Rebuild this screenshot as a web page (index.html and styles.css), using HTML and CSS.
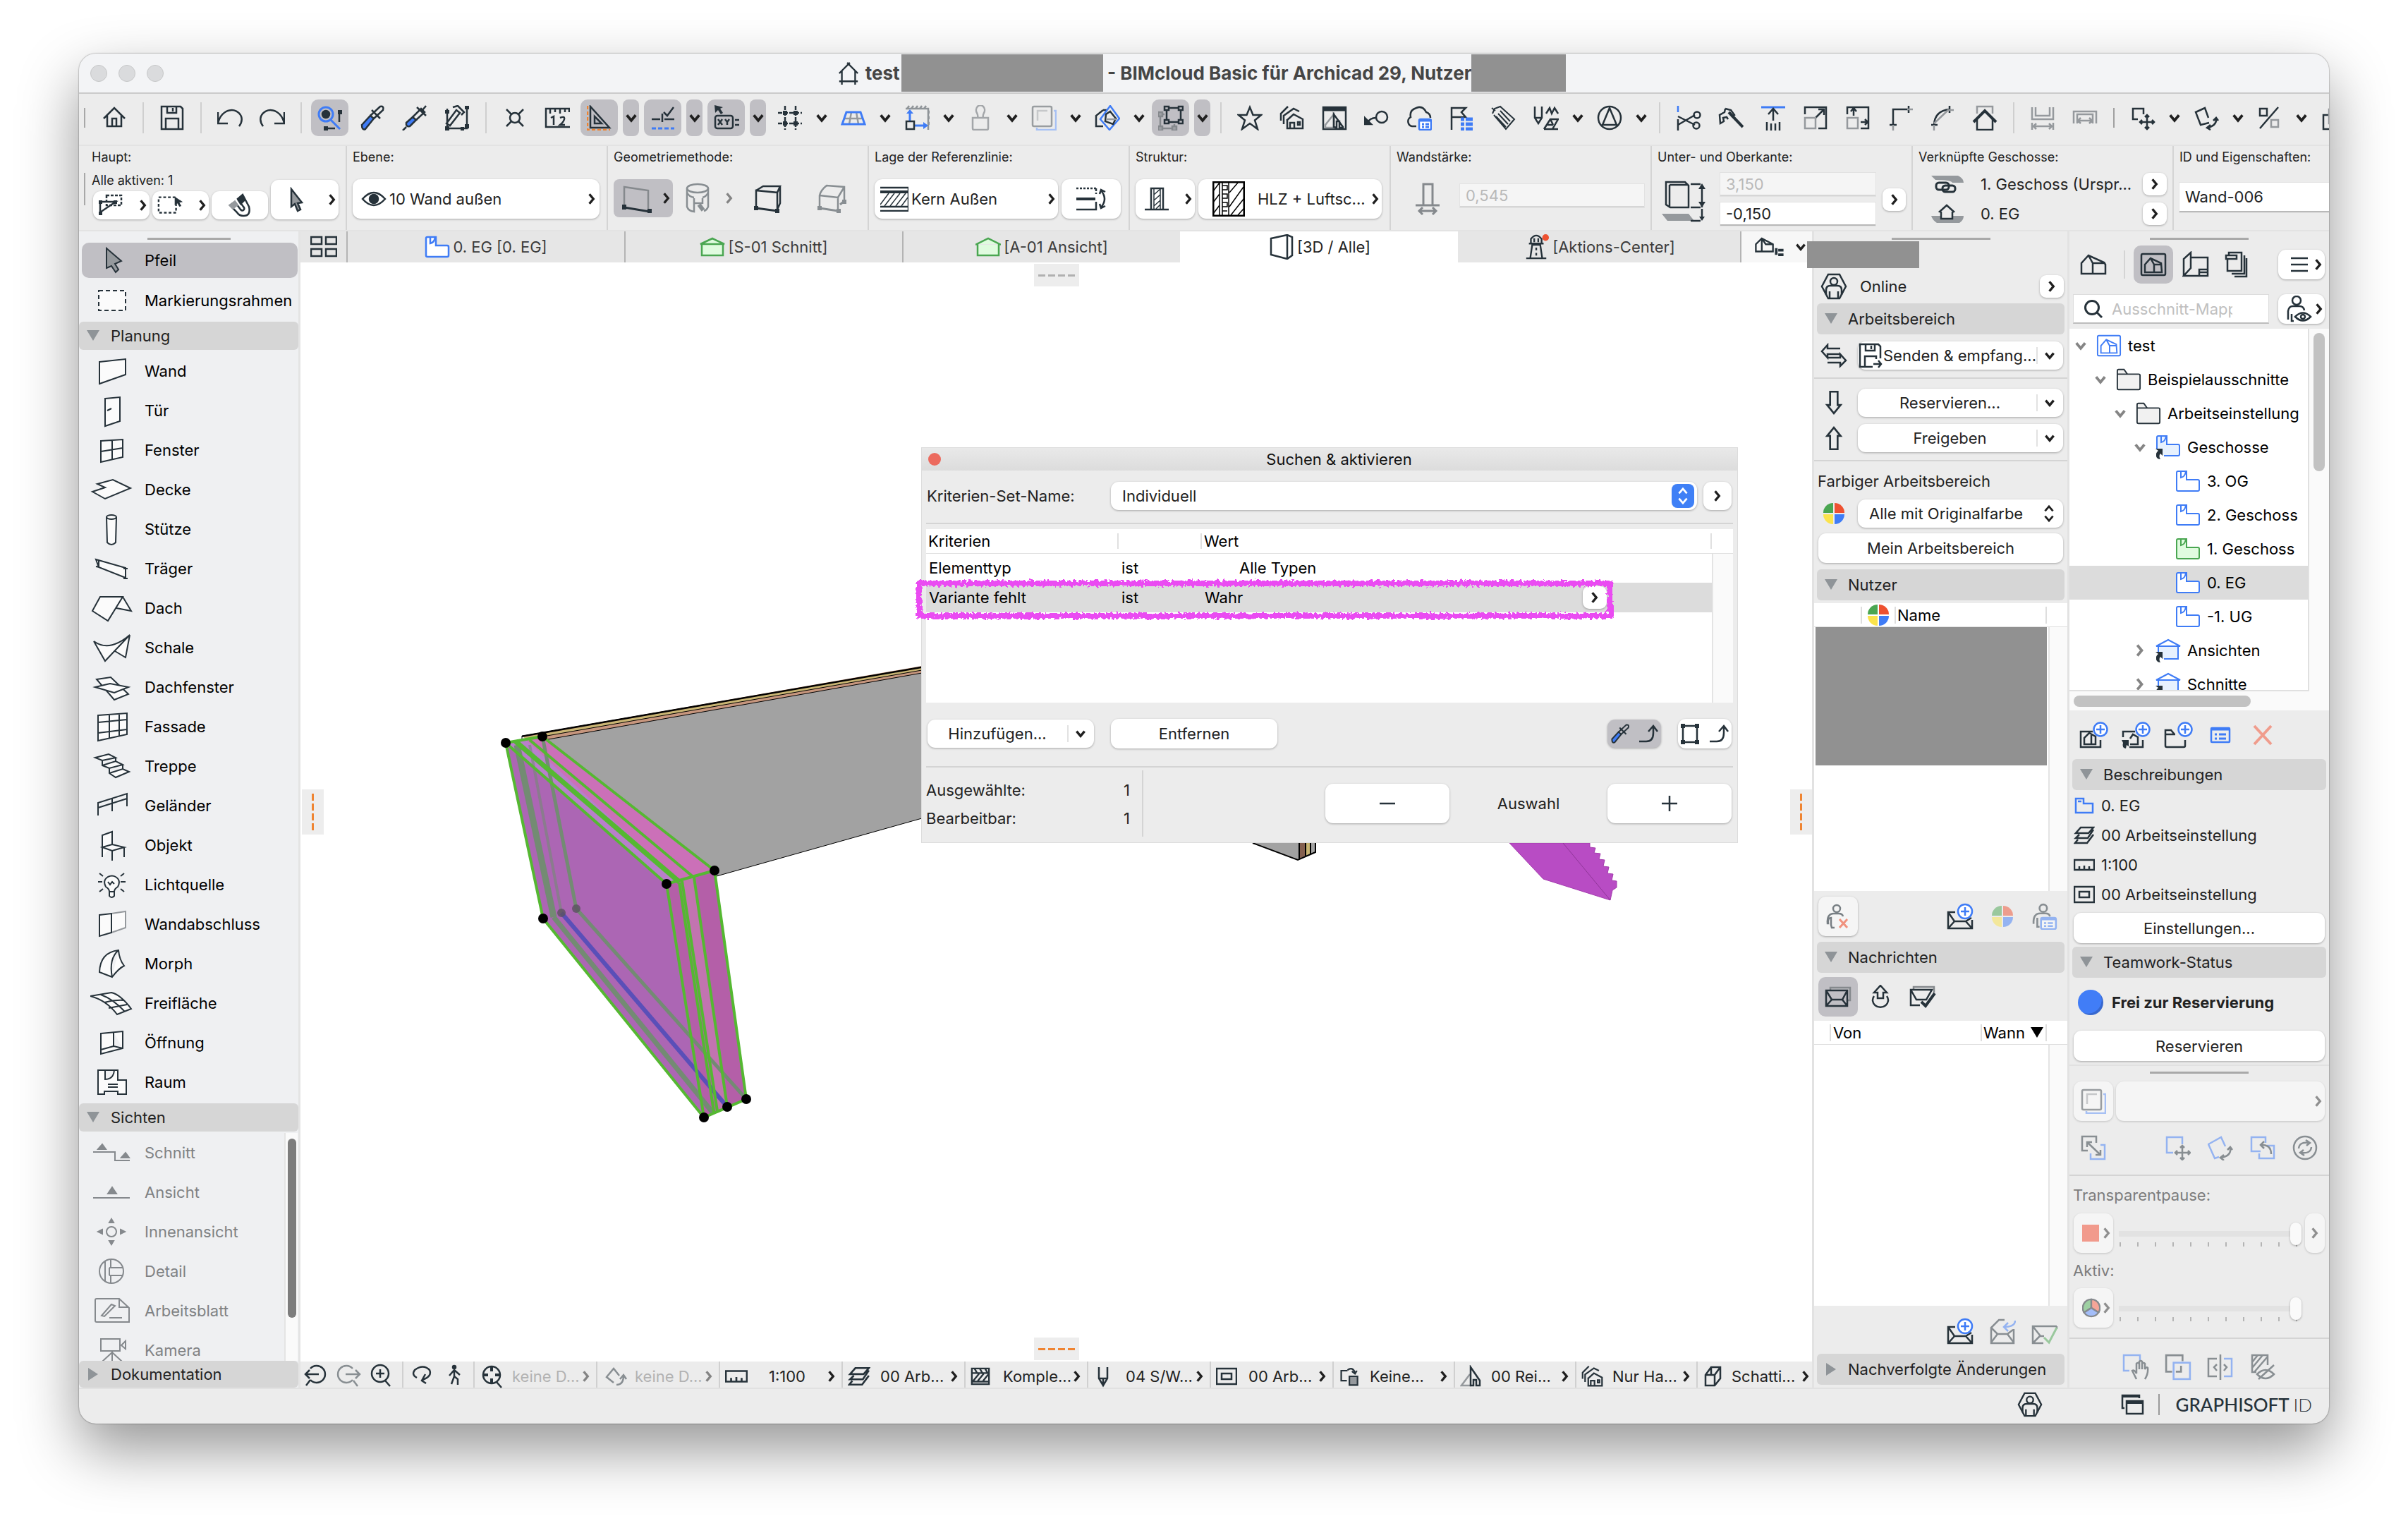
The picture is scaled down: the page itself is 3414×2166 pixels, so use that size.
FILE: index.html
```html
<!DOCTYPE html>
<html lang="de">
<head>
<meta charset="utf-8">
<title>test - BIMcloud Basic für Archicad 29</title>
<link rel="stylesheet" href="styles.css">
</head>
<body>
<svg class="sprite" aria-hidden="true">
  <!-- arrows -->
  <symbol id="cd" viewBox="0 0 16 16"><path d="M3 5l5 6 5-6" stroke-width="3"/></symbol>
  <symbol id="cr" viewBox="0 0 16 16"><path d="M5 2l5 6-5 6" stroke-width="3"/></symbol>
  <symbol id="ud" viewBox="0 0 20 28"><path d="M4 10l6-7 6 7M4 18l6 7 6-7" stroke-width="3"/></symbol>
  <symbol id="tri" viewBox="0 0 18 18"><path d="M0 1h18L9 16z" fill="#8f9498" stroke="none"/></symbol>
  <symbol id="trir" viewBox="0 0 18 18"><path d="M2 0v18L16 9z" fill="#8f9498" stroke="none"/></symbol>
  <!-- main toolbar -->
  <symbol id="logo" viewBox="0 0 30 34"><path d="M1 17L17 1M29 17L13 1M5 13v21M25 13v21M1 29h28"/></symbol>
  <symbol id="home" viewBox="0 0 36 36"><path d="M3 19L18 4l15 15M8 15v15h20V15M15 30V19h6v11"/></symbol>
  <symbol id="save" viewBox="0 0 36 36"><path d="M3 2h27l3 3v29H3zM11 2v9h13V2M19 4v5M9 34V19h18v15"/></symbol>
  <symbol id="undo" viewBox="0 0 36 36"><path d="M1 10v16h14M1 26C6 4 28 2 34 16c2 6 0 10-3 14"/></symbol>
  <symbol id="redo" viewBox="0 0 36 36"><path d="M35 10v16H21M35 26C30 4 8 2 2 16c-2 6 0 10 3 14"/></symbol>
  <symbol id="snapsel" viewBox="0 0 36 36"><circle cx="12" cy="13" r="10" stroke="#3f7cf6" stroke-width="3"/><path d="M19 21l13 13" stroke="#3f7cf6" stroke-width="3"/><circle cx="12" cy="13" r="5" fill="#26323a"/><path d="M31 24V10M12 33h13"/><path d="M29 7h6v6h-6zM9 30h6v6H9z" fill="#26323a" stroke="none"/></symbol>
  <symbol id="pip" viewBox="0 0 36 36"><path d="M3 28l12-13 5 4L8 34q-5 2-5-6z" fill="#3f7cf6"/><path d="M15 15L29 2q6-1 4 5L20 19M17 7l12 12"/></symbol>
  <symbol id="syr" viewBox="0 0 36 36"><path d="M6 25l9-8 5 4-9 9q-6 1-5-5z" fill="#3f7cf6"/><path d="M6 31l-5 5M15 17L27 5l5 5-12 11M21 3l13 12M29 7l5-6"/></symbol>
  <symbol id="trans" viewBox="0 0 36 36"><path d="M4 5v28h28V5M3 26L17 7l5 4L8 29zM12 3l7-2 9 9-4 4"/><path d="M1 7h6v5H1zM29 1h6v5h-6zM1 30h6v6H1zM29 27h6v6h-6zM23 31h5v5h-5z" fill="#26323a" stroke="none"/></symbol>
  <symbol id="xo" viewBox="0 0 36 36"><circle cx="18" cy="18" r="7"/><path d="M6 6l7 7M30 6l-7 7M6 30l7-7M30 30l-7-7"/></symbol>
  <symbol id="meas" viewBox="0 0 36 36"><path d="M36 5H2v26h34M8 5v7M15 5v5M22 5v7M29 5v5M35 5v5M9 18l4-2v12M22 18q7-3 6 2-1 4-6 8h7"/></symbol>
  <symbol id="setsq" viewBox="0 0 36 36"><path d="M5 2v30h27zM11 16v10h10z"/><path d="M1 1v34h32" stroke="#ef8432" stroke-dasharray="5 3"/></symbol>
  <symbol id="guide" viewBox="0 0 36 36"><path d="M2 20h12M20 20h14M17 12v12M19 10l5 5 9-12"/><path d="M2 33h32" stroke="#3f7cf6" stroke-width="3" stroke-dasharray="6 3"/></symbol>
  <symbol id="xy" viewBox="0 0 36 36"><path d="M1 0l12 3-4 2 4 6-3 2-4-6-4 4z" fill="#26323a" stroke="none"/><rect x="2" y="15" width="25" height="18" rx="3"/><path d="M6 20l6 8M12 20l-6 8M16 20l3 4 3-4M19 24v4M30 21h6M30 28h6"/></symbol>
  <symbol id="grid" viewBox="0 0 36 36"><path d="M1 11h34M1 26h34M11 1v34M26 1v34" stroke-dasharray="6 2"/><path d="M8 8h6v6H8zM23 8h6v6h-6zM8 23h6v6H8zM23 23h6v6h-6z" fill="#26323a" stroke="none"/></symbol>
  <symbol id="persp" viewBox="0 0 36 36"><path d="M15 10l-3 17M22 10l3 17M5 19h26" stroke="#95999d"/><path d="M8 10h20l6 17H2z" stroke="#3f7cf6" stroke-width="3"/></symbol>
  <symbol id="gridel" viewBox="0 0 36 36"><path d="M2 5h32v30M4 5l3-4M10 5l3-4M16 5l3-4M22 5l3-4M28 5l3-4M34 12l3-4M34 20l3-4M34 28l3-4" stroke="#8f9498"/><path d="M8 23V8M14 29h16" stroke="#3f7cf6" stroke-width="3"/><path d="M3 12l5-6 5 6zM27 24l7 5-7 5z" fill="#3f7cf6" stroke="none"/><rect x="3" y="23" width="11" height="11"/></symbol>
  <symbol id="stamp" viewBox="0 0 36 36"><path d="M7 18h22v15q0 2-2 2H9q-2 0-2-2zM14 18q1-3-1-7a6 7 0 1 1 10 0q-2 4-1 7" stroke="#a3a6a9"/></symbol>
  <symbol id="trace" viewBox="0 0 36 36"><path d="M32 8h3v27H8v-3" stroke="#a6c0f4"/><rect x="2" y="2" width="27" height="28" rx="2" stroke="#999da0"/><path d="M9 22V8h14" stroke="#c6c8ca"/></symbol>
  <symbol id="cutp" viewBox="0 0 36 36"><path d="M12 7L2 15v15h10M12 7h6"/><path d="M22 1l13 18-14 16L8 20z" stroke="#3f7cf6"/><path d="M22 9l8 10-4 8-11-4 1-10z"/><path d="M16 20h14" stroke="#95999d"/></symbol>
  <symbol id="group" viewBox="0 0 36 36"><path d="M12 4h20v20H12z"/><path d="M3 13v20h20V27M3 13h6" stroke="#85898d"/><path d="M0 10h6v6H0zM0 30h6v6H0zM20 30h6v6h-6z" fill="#9ea1a5" stroke="#85898d"/><path d="M9 2h6v5H9zM29 2h6v5h-6zM9 21h6v5H9zM29 21h6v5h-6z" fill="#bfbec3"/></symbol>
  <symbol id="star" viewBox="0 0 36 36"><path d="M18 3l4.500 11H34l-9 7.500L29 34l-11-8-11 8 4-12.500L2 14h11.500z"/></symbol>
  <symbol id="houses" viewBox="0 0 36 36"><path d="M10 22l10-9 13 7v13H11V20M15 33v-8h6v8M26 24h3v4h-3zM6 27V15l14-10 8 4M2 22V12L12 2"/></symbol>
  <symbol id="hwin" viewBox="0 0 36 36"><rect x="2" y="3" width="32" height="31"/><path d="M2 6h32" stroke-width="5"/><path d="M5 28l12-15v19H5z" stroke="#95999d"/><path d="M17 31V13l13 18v1h-5v-9h-4v9z"/></symbol>
  <symbol id="key" viewBox="0 0 36 36"><circle cx="25" cy="17" r="8"/><path d="M17 18q-9 0-12 7"/><path d="M1 18v9h9z" fill="#26323a"/></symbol>
  <symbol id="cloud" viewBox="0 0 36 36"><path d="M14 30H8a7 7 0 0 1-2-13q-2-10 8-13 9-4 14 6 6 2 6 8"/><rect x="18" y="20" width="17" height="15" rx="2" stroke="#3f7cf6" fill="#fff"/><path d="M18 22h17M22 27h3M27 27h5M22 31h3M27 31h5" stroke="#3f7cf6" stroke-width="3"/></symbol>
  <symbol id="flag" viewBox="0 0 36 36"><path d="M4 35V4h20l-6 6 6 7H4"/><path d="M17 20h5M24 20h10M17 27h5M24 27h10M17 34h5M24 34h10" stroke="#3f7cf6" stroke-width="5"/></symbol>
  <symbol id="tags" viewBox="0 0 36 36"><path d="M2 12L5 5l8-3 20 18-12 14L4 14M7 16l14 15M10 12l14 15M13 8l14 15M1 4l5 4" stroke-width="2"/></symbol>
  <symbol id="pens" viewBox="0 0 36 36"><path d="M2 2v16l5 8 5-8V2M2 18h10M18 12l5-8 3 8 4-8 5 8M15 34h20M15 34l9-14h11l-8 14M20 28h8M24 20l4 8"/></symbol>
  <symbol id="comp" viewBox="0 0 36 36"><circle cx="18" cy="18" r="16"/><path d="M18 4L8 28h20z"/></symbol>
  <symbol id="sciss" viewBox="0 0 36 36"><path d="M3 36V20"/><path d="M3 1v9" stroke="#3f7cf6"/><path d="M3 16l24 12M3 28L27 14"/><circle cx="30" cy="14" r="4.500"/><circle cx="29" cy="29" r="4.500"/></symbol>
  <symbol id="axe" viewBox="0 0 36 36"><path d="M10 5l8 2 5 7-4 3M10 5l-1 5-7 4 1 12 5-3-1-5 5-1 2 3"/><path d="M15 10l20 21" stroke-width="4"/></symbol>
  <symbol id="extrude" viewBox="0 0 36 36"><path d="M1 3h34" stroke="#3f7cf6" stroke-width="3"/><path d="M18 22V6M11 13l7-8 7 8M9 24v12M15 26v10M21 26v10M27 24v12"/></symbol>
  <symbol id="resize" viewBox="0 0 36 36"><path d="M3 13V3h30v30H22M18 18L30 6M22 6h8v8"/><path d="M3 18h15v15H3z" stroke="#95999d"/></symbol>
  <symbol id="stretch" viewBox="0 0 36 36"><path d="M3 13V3h30v30H22M12 15V5M8 9l4-5 4 5M22 24h10M28 20l4 4-4 4"/><path d="M3 18h15v15H3z" stroke="#95999d"/></symbol>
  <symbol id="corner" viewBox="0 0 36 36"><path d="M8 28V6h22M3 28h10M30 1v10"/><path d="M8 28v8M28 6h8" stroke="#95999d"/></symbol>
  <symbol id="fillet" viewBox="0 0 36 36"><path d="M6 28Q7 8 28 6M2 28h9M28 1v10"/><path d="M6 28v8M6 26L26 7h8" stroke="#95999d"/></symbol>
  <symbol id="roofh" viewBox="0 0 36 36"><path d="M7 12V2h22v10" stroke="#95999d"/><path d="M7 18v17h22V18"/><path d="M2 24L18 8l16 16" stroke-width="4"/></symbol>
  <symbol id="wx" viewBox="0 0 36 36"><path d="M3 3v17h30V3M8 3v12h20V3M3 25v10M33 25v10M5 30h26M9 26l-4 4 4 4M27 26l4 4-4 4" stroke="#95999d"/></symbol>
  <symbol id="wx2" viewBox="0 0 36 36"><path d="M2 26V9h32v17M7 26V13h22v13M9 22h18M12 18l-4 4 4 4M24 18l4 4-4 4" stroke="#95999d"/></symbol>
  <symbol id="mv" viewBox="0 0 36 36"><path d="M11 20H4V5h15v8"/><path d="M24 14v20M14 24h20M21 17l3-3 3 3M21 31l3 3 3-3M17 21l-3 3 3 3M31 21l3 3-3 3"/></symbol>
  <symbol id="rot" viewBox="0 0 36 36"><path d="M22 25L10 28 3 10 16 4l5 14M32 19q1 10-12 13M28 22l4-4 3 4M24 28l-5 4 5 3"/></symbol>
  <symbol id="mir" viewBox="0 0 36 36"><path d="M30 3L4 33M4 5h10v10H4z"/><path d="M20 21h10v10H20z" stroke="#95999d"/></symbol>
  <symbol id="mult" viewBox="0 0 36 36"><path d="M12 14H4v20h16"/><path d="M12 6h20v20H12z" stroke="#95999d"/></symbol>
  <!-- info box -->
  <symbol id="i1" viewBox="0 0 36 36"><path d="M12 4h21v14H12z" stroke-dasharray="4 2"/><path d="M3 28V13h22z"/><path d="M1 11h5v5H1zM1 27h5v5H1zM22 11h5v5h-5z" fill="#26323a" stroke="none"/></symbol>
  <symbol id="i2" viewBox="0 0 40 36"><path d="M2 6h26v23H2z" stroke-dasharray="4 3"/><path d="M26 5l12 8-5 1 3 5-3 1-3-5-4 3z" fill="#26323a" stroke="none"/></symbol>
  <symbol id="magnet" viewBox="0 0 36 36"><path d="M15 9l7-6 9 17q3 13-8 13-6 0-9-5L4 18l7-5 8 11q3 3 5 0 1-2-1-4z"/><path d="M14 10l8-8 4 9-7 7z" fill="#26323a" stroke="none"/><path d="M2 18l9-7 5 7-8 6z" fill="#95999d" stroke="none"/></symbol>
  <symbol id="arrow" viewBox="0 0 36 36"><path d="M11 3l15 19-6 1 4 9-4 2-4-10-5 4z" fill="#95999d"/></symbol>
  <symbol id="eye" viewBox="0 0 36 36"><path d="M2 18q16-18 32 0-16 18-32 0z"/><circle cx="18" cy="18" r="6" fill="#26323a"/></symbol>
  <symbol id="g1" viewBox="0 0 44 44"><path d="M4 33V6l34 5v27" stroke="#85898d"/><path d="M4 35l36 6" stroke-width="3"/><path d="M1 31h6v7H1zM37 37h6v6h-6z" fill="#26323a" stroke="none"/></symbol>
  <symbol id="g2" viewBox="0 0 44 44"><path d="M4 8v26q2 6 10 7V22M34 8v26q-2 5-6 6M26 22v8M14 29h12"/><ellipse cx="19" cy="8" rx="15" ry="6"/><path d="M4 14q3 6 10 7M34 14q-3 6-8 7"/><path d="M21 31l6 8" stroke-width="6"/></symbol>
  <symbol id="g3" viewBox="0 0 44 44"><path d="M4 35V11l30 3v24M4 11l10-6h24l-4 9M38 5v24l-4 9"/><path d="M4 36l30 4" stroke-width="3"/><path d="M1 33h6v6H1zM31 37h6v6h-6z" fill="#26323a" stroke="none"/></symbol>
  <symbol id="g4" viewBox="0 0 44 44"><path d="M5 35V18q2-8 10-14l25 2v20M5 18l26 3 9-15M31 21v17"/><path d="M5 36l26 4M40 26l-6 5" stroke-width="3"/><path d="M2 33h6v6H2zM29 37h6v6h-6zM37 24h6v6h-6z" fill="#26323a" stroke="none"/></symbol>
  <symbol id="ref" viewBox="0 0 40 36"><path d="M0 2h40M0 35h40M0 29h40M40 2v33"/><path d="M0 8h40" stroke-width="4"/><path d="M0 26l12-16M6 28l14-18M14 28l14-18M22 28l14-18M30 28l9-12" stroke-width="1.500"/></symbol>
  <symbol id="flip" viewBox="0 0 44 36"><path d="M1 3h28" stroke-dasharray="3 2"/><path d="M29 3v8" stroke-dasharray="4 2"/><path d="M1 18h27" stroke-width="4"/><path d="M1 33h28V22M36 6q10 12 0 24M34 11l2-6 6 3M34 25l2 6 6-3"/></symbol>
  <symbol id="col" viewBox="0 0 36 36"><path d="M10 3h17v30H10zM1 33h34"/><path d="M14 4v28M23 4v28M14 12l9-8M14 20l9-8M14 28l9-8M17 32l6-6" stroke-width="1.500"/></symbol>
  <symbol id="hlz" viewBox="0 0 46 50"><path d="M1 1h44v48H1z" stroke="#000" stroke-width="3"/><path d="M10 1v48M14 1v48M23 1v48M1 14l9-12M1 30l9-12M1 46l9-12M24 16L36 2M24 36L44 8M26 48L45 24M36 48l9-10M14 6h7v6h-7M14 18h7v6h-7M14 30h7v6h-7M14 42h7" stroke="#000" stroke-width="1.500"/></symbol>
  <symbol id="thick" viewBox="0 0 36 48"><path d="M12 2h13v30H12zM1 32h34M6 40h24M11 35l-5 5 5 5M25 35l5 5-5 5" stroke="#85898d" stroke-width="3"/></symbol>
  <symbol id="height" viewBox="0 0 64 60"><path d="M0 47h38l8 10H8z" fill="#95999d" stroke="none"/><path d="M6 2h27l5 5v31H12L6 34zM11 6h27M11 6v32M57 8v30M57 40v14M41 5h14M41 38h14M41 57h14"/><path d="M57 4l5 8H52zM57 38l5-8H52zM57 57l4-6h-8z" fill="#26323a" stroke="none"/></symbol>
  <symbol id="link" viewBox="0 0 46 24"><path d="M0 0h38q8 4 8 10H30q-2-4-24-4z" fill="#95999d" stroke="none"/><rect x="7" y="10" width="18" height="10" rx="4" stroke-width="3"/><rect x="16" y="14" width="18" height="9" rx="4" stroke-width="3"/></symbol>
  <symbol id="eg" viewBox="0 0 46 26"><path d="M0 16h46q0 6-6 10H8q-6-4-8-10z" fill="#95999d" stroke="none"/><path d="M14 20v-9l-2-1 10-9 10 9-2 1v9z" fill="#ececec"/></symbol>
  <!-- tabs -->
  <symbol id="four" viewBox="0 0 38 30"><path d="M1 1h15v10H1zM22 1h15v10H22zM1 18h15v10H1zM22 18h15v10H22z"/></symbol>
  <symbol id="plan" viewBox="0 0 36 32"><path d="M2 4q0-2 2-2h12v12h16q2 0 2 2v12q0 2-2 2H4q-2 0-2-2z" fill="#fff" stroke="#3f7cf6"/><path d="M8 2v9q6-1 7-9" stroke="#3f7cf6"/></symbol>
  <symbol id="plang" viewBox="0 0 36 32"><path d="M2 4q0-2 2-2h12v12h16q2 0 2 2v12q0 2-2 2H4q-2 0-2-2z" fill="#e0fbdf" stroke="#4aa651"/><path d="M8 2v9q6-1 7-9" stroke="#4aa651"/></symbol>
  <symbol id="planl" viewBox="0 0 36 36"><path d="M2 20V4q0-2 2-2h12v12h16q2 0 2 2v12q0 2-2 2H12" fill="#e7f1fe" stroke="#3f7cf6"/><path d="M8 2v9q6-1 7-9" stroke="#3f7cf6"/><path d="M0 20h10v10l-3-3q-3 3 0 8-7 0-6-8 1-3 3-4z" fill="#26323a" stroke="none"/></symbol>
  <symbol id="hl" viewBox="0 0 36 36"><path d="M4 12h28v18H10V20H4z" fill="#e7f1fe" stroke="none"/><path d="M4 20v-8M1 12L18 3l17 9zM32 12v18H12" stroke="#3f7cf6"/><path d="M0 20h10v10l-3-3q-3 3 0 8-7 0-6-8 1-3 3-4z" fill="#26323a" stroke="none"/></symbol>
  <symbol id="sec" viewBox="0 0 36 28"><path d="M3 10h30v16H3zM1 10L18 2l17 8z" fill="#e0fbdf" stroke="#4aa651"/></symbol>
  <symbol id="elev" viewBox="0 0 36 28"><path d="M3 10v16h30V10M0 11L18 2l18 9" fill="#e0fbdf" stroke="#4aa651"/></symbol>
  <symbol id="box3" viewBox="0 0 36 36"><path d="M3 6l23-5 7 3v26l-7 5-23-6zM26 1v34"/></symbol>
  <symbol id="light" viewBox="0 0 36 38"><path d="M2 36h30M8 36l3-20h12l3 20M6 14h22M9 14V7q8-10 16 0v7M17 20v4M17 28v4M14 6v6M20 6v6"/><circle cx="31" cy="5" r="5" fill="#ee5130" stroke="none"/></symbol>
  <symbol id="hlist" viewBox="0 0 46 30"><path d="M2 22V11L11 2l17 9v11zM11 2v20M11 2l6 9h11"/><path d="M33 17v10M36 20h8M36 27h8" stroke-width="4"/></symbol>
  <!-- teamwork -->
  <symbol id="hex" viewBox="0 0 38 36"><path d="M11 1h16l9 17-9 17H11L2 18z"/><circle cx="19" cy="11" r="5"/><path d="M8 30V23q0-6 6-6h10q6 0 6 6v7M13 34v-9M25 34v-9"/></symbol>
  <symbol id="sync" viewBox="0 0 38 32"><path d="M28 6H10V1L2 10l8 9v-5h18M10 19h18v-5l8 9-8 8v-5H10"/></symbol>
  <symbol id="send" viewBox="0 0 34 36"><path d="M20 34H2V2h26l3 3v17M10 2v9h13V2M18 4v5M12 34h-3V19h16v4M21 30h11M28 25l4 5-4 5"/></symbol>
  <symbol id="dn" viewBox="0 0 24 32"><path d="M7 1h10v18h4l-9 11-9-11h4z"/></symbol>
  <symbol id="up" viewBox="0 0 24 32"><path d="M7 31h10V13h4L12 2 3 13h4z"/></symbol>
  <symbol id="pie" viewBox="0 0 32 32"><path d="M15 15V1A14 14 0 0 0 1 15z" fill="#4aa651" stroke="none"/><path d="M17 15V1a14 14 0 0 1 14 14z" fill="#ee5130" stroke="none"/><path d="M15 17v14A14 14 0 0 1 1 17z" fill="#fbe34c" stroke="none"/><path d="M17 17v14a14 14 0 0 0 14-14z" fill="#3f7cf6" stroke="none"/></symbol>
  <symbol id="px" viewBox="0 0 36 36"><circle cx="16" cy="7" r="5"/><path d="M13 34H9l-1-4V20q-5 0-4 8H3q-1-14 9-14h7q5 0 6 4"/><path d="M20 22l11 12M31 22L20 34" stroke="#ee5130" stroke-width="3"/></symbol>
  <symbol id="pc" viewBox="0 0 36 36"><circle cx="16" cy="7" r="5"/><path d="M11 32H8V20M3 28q-1-14 9-14h7q5 0 6 4"/><rect x="13" y="20" width="20" height="15" rx="2" stroke="#3f7cf6" fill="#fff"/><path d="M13 22h20M17 27h3M22 27h7M17 31h3M22 31h7" stroke="#3f7cf6"/></symbol>
  <symbol id="mailp" viewBox="0 0 38 38"><path d="M12 13H2v23h34V24M2 13l9 13h16l8-5M11 26L3 35M27 26l8 9"/><circle cx="26" cy="12" r="10" fill="#fff" stroke="#3f7cf6"/><path d="M26 6v12M20 12h12" stroke="#3f7cf6"/></symbol>
  <symbol id="mailr" viewBox="0 0 38 38"><path d="M22 3h-8L3 14v22h32V16M3 14l9 9h14l8-6M12 23L3 35M26 23l9 12"/><path d="M37 4q0 9-16 9M27 7l-6 6 6 6" stroke="#3f7cf6"/></symbol>
  <symbol id="mailc" viewBox="0 0 38 38"><path d="M17 36H2V12h34M2 12l11 14h5M2 36l10-10M36 12v4"/><path d="M18 28l7 7L36 14" stroke="#4aa651" stroke-width="3"/></symbol>
  <symbol id="mail" viewBox="0 0 38 30"><path d="M8 5V2h28v18h-4" stroke="#85898d"/><path d="M2 6h30v22H2zM2 6l8 13h15l7-13M10 19l-8 9M25 19l7 9"/></symbol>
  <symbol id="outm" viewBox="0 0 30 34"><path d="M6 16a11 10 0 1 0 18 0M11 19v-8H6l9-10 9 10h-5v8z"/></symbol>
  <symbol id="mailk" viewBox="0 0 38 32"><path d="M6 5V2h29v8" stroke="#85898d"/><path d="M15 28H2V6h30L24 20H10L2 6"/><path d="M17 23l6 6L36 11" stroke-width="4"/></symbol>
  <!-- navigator -->
  <symbol id="hs" viewBox="0 0 38 30"><path d="M2 28V13L12 2l22 10 2 3v13zM12 2l6 11v15M18 13h18"/></symbol>
  <symbol id="hsbox" viewBox="0 0 38 34"><rect x="2" y="2" width="34" height="30" rx="2"/><path d="M7 28V17l8-9 15 7 1 13zM15 8l5 9v11M20 17h11"/></symbol>
  <symbol id="lay" viewBox="0 0 38 36"><path d="M2 34V10l10-9v22L2 34h34V8H12M24 34v-9h12M24 29h12"/></symbol>
  <symbol id="pub" viewBox="0 0 38 38"><path d="M4 11v17h20V2H6v4M2 6h15v5H2zM28 6v26H10M31 10v26H14"/></symbol>
  <symbol id="menu" viewBox="0 0 26 24"><path d="M1 3h24M1 12h24M1 21h24"/></symbol>
  <symbol id="peye" viewBox="0 0 36 38"><circle cx="14" cy="7" r="6"/><path d="M10 36H7V26M2 34V22q1-7 7-7h9q6 0 7 6"/><path d="M12 30q11-11 22 0-11 11-22 0z"/><circle cx="23" cy="30" r="3"/></symbol>
  <symbol id="mag" viewBox="0 0 28 28"><circle cx="12" cy="12" r="9.500" stroke-width="3"/><path d="M19 19l7 7" stroke-width="3"/></symbol>
  <symbol id="fold" viewBox="0 0 38 34"><path d="M2 9V4q0-2 2-2h8l5 7h17q2 0 2 2v19q0 2-2 2H4q-2 0-2-2zh15" fill="#f1f1f1"/></symbol>
  <symbol id="navp" viewBox="0 0 42 38"><path d="M20 14H3v22h28V26M8 32v-9l7-7 9 5v11zM18 19v12"/><circle cx="31" cy="11" r="9.500" fill="#fff" stroke="#3f7cf6"/><path d="M31 5v12M25 11h12" stroke="#3f7cf6"/></symbol>
  <symbol id="navl" viewBox="0 0 42 38"><path d="M20 14H3v8M12 36h19V26M13 24l4-6 7 4v10H13"/><path d="M1 26h10v9l-3-2-1 5q-6-1-4-8z" fill="#26323a" stroke="none"/><circle cx="31" cy="11" r="9.500" fill="#fff" stroke="#3f7cf6"/><path d="M31 5v12M25 11h12" stroke="#3f7cf6"/></symbol>
  <symbol id="navf" viewBox="0 0 42 38"><path d="M17 18H3v16q0 2 2 2h24q2 0 2-2V26M3 18v-6h8l5 6"/><circle cx="31" cy="11" r="9.500" fill="#fff" stroke="#3f7cf6"/><path d="M31 5v12M25 11h12" stroke="#3f7cf6"/></symbol>
  <symbol id="card" viewBox="0 0 30 24"><rect x="2" y="2" width="26" height="20" rx="1" stroke="#3f7cf6"/><path d="M2 4h26M7 11h3M13 11h10M7 17h3M13 17h10" stroke="#3f7cf6" stroke-width="3"/></symbol>
  <symbol id="del" viewBox="0 0 30 32"><path d="M3 3l24 26M27 3L3 29" stroke="#f09c8c" stroke-width="4"/></symbol>
  <symbol id="d1" viewBox="0 0 30 24"><path d="M3 2h11v7h13v13H3zM6 6h5" stroke="#3f7cf6"/></symbol>
  <symbol id="layers" viewBox="0 0 30 24"><path d="M10 1h18l-7 8H3zM8 11l-5 5h17l8-12M6 18l-4 5h17l9-12"/></symbol>
  <symbol id="ruler" viewBox="0 0 30 24"><path d="M1 5h28v14H1zM8 19v-5M15 19v-6M22 19v-5"/></symbol>
  <symbol id="frame" viewBox="0 0 30 24"><path d="M1 1h28v22H1zM8 8h14v8H8z" stroke-width="2.500"/></symbol>
  <symbol id="tr1" viewBox="0 0 36 36"><path d="M10 22H2V2h20v9"/><path d="M28 14h6v20H14v-8" stroke="#3f7cf6"/><path d="M9 10l19 18M9 17v-7h7M28 21v7h-7"/></symbol>
  <symbol id="trm" viewBox="0 0 36 36"><path d="M11 25H2V3h22v10" stroke="#3f7cf6"/><path d="M24 16v18M15 25h20M21 18l3-3 3 3M21 32l3 3 3-3M17 22l-3 3 3 3M32 22l3 3-3 3"/></symbol>
  <symbol id="trr" viewBox="0 0 36 36"><path d="M16 31l-6 2L1 13 19 3l6 13" stroke="#3f7cf6"/><path d="M32 18q2 12-14 14M28 21l4-4 3 4M23 28l-5 4 5 4"/></symbol>
  <symbol id="trb" viewBox="0 0 36 36"><path d="M15 23H2V3h20v8M24 15h10v18H13v-7" stroke="#3f7cf6"/><path d="M30 27q0-14-15-13M20 9l-5 5 5 5"/></symbol>
  <symbol id="trc" viewBox="0 0 36 36"><circle cx="18" cy="18" r="16"/><path d="M9 19q1-10 15-8M19 7l6 4-5 4M27 17q-1 10-15 8M17 29l-6-4 5-4"/></symbol>
  <symbol id="pie3" viewBox="0 0 28 28"><path d="M14 14V1A13 13 0 0 0 3 21z" fill="#9ed0a2"/><path d="M14 14V1a13 13 0 0 1 11 20z" fill="#f5a598"/><path d="M14 14L3 21a13 13 0 0 0 22 0z" fill="#a3bdf8"/></symbol>
  <symbol id="hand" viewBox="0 0 38 38"><path d="M10 24H2V2h23v7" stroke="#3f7cf6"/><path d="M20 36l-6-12q3-2 6 4V14q2-2 4 0v8V11q2-2 4 0v11-8q2-2 4 0v8q2-4 4-2 1 8-4 16"/></symbol>
  <symbol id="ovl" viewBox="0 0 36 36"><path d="M10 24H2V2h22v8M22 16v8h-7"/><rect x="12" y="12" width="22" height="22" stroke="#3f7cf6"/></symbol>
  <symbol id="spl" viewBox="0 0 38 38"><path d="M14 7H2v25h12M19 1v36M14 15l-4 4 4 5M24 15l4 4-4 5"/><path d="M24 7h11v25H24" stroke="#3f7cf6"/></symbol>
  <symbol id="hid" viewBox="0 0 36 38"><path d="M9 26H3V2h22v14M3 12l8-10M3 20L18 2M6 26L25 4M10 29q12-12 24 0-12 12-24 0zM12 36l22-20"/></symbol>
  <symbol id="wins" viewBox="0 0 36 32"><path d="M6 21H3V3h24v4M9 11h23v18H9z"/><path d="M3 4h24M9 13h23" stroke-width="4"/></symbol>
  <!-- quick options -->
  <symbol id="qz1" viewBox="0 0 36 32"><path d="M10 7a12 12 0 1 1 0 16M22 15H3M9 9l-6 6 6 6M10 23l-6 8"/></symbol>
  <symbol id="qz2" viewBox="0 0 36 32"><path d="M24 7a12 12 0 1 0 0 16M14 15h20M28 9l6 6-6 6M25 24l6 8"/></symbol>
  <symbol id="qz3" viewBox="0 0 36 32"><circle cx="17" cy="14" r="12"/><path d="M17 8v12M11 14h12M24 24l7 8"/></symbol>
  <symbol id="qorb" viewBox="0 0 36 32"><path d="M10 20Q2 16 7 9q12-9 21 0 4 9-10 14M22 15l-5 9 6 4"/></symbol>
  <symbol id="qwalk" viewBox="0 0 24 32"><circle cx="12" cy="5" r="2" fill="#26323a"/><path d="M12 9v9l-4 11M12 18l5 4v8M5 17l7-8 8 7"/></symbol>
  <symbol id="qfit" viewBox="0 0 36 32"><circle cx="17" cy="14" r="12"/><path d="M24 24l7 8"/><path d="M17 3v6M17 19v6M6 14h6M22 14h6" stroke-width="4"/></symbol>
  <symbol id="qrot" viewBox="0 0 36 32"><path d="M16 25L6 17 16 5l8 10M20 28q10 0 10-13M25 20l5-6 4 6"/></symbol>
  <symbol id="qfill" viewBox="0 0 30 28"><path d="M2 2h26v24H2zM2 9h26M2 22h26M4 21l9-11M11 21l9-11M19 21l8-10M6 2l4 7M14 2l4 7M22 2l4 7" stroke-width="2.500"/></symbol>
  <symbol id="qpen" viewBox="0 0 20 32"><path d="M3 3v16l6 10 6-10V3M3 19h12M9 19v8"/></symbol>
  <symbol id="qren" viewBox="0 0 36 32"><path d="M14 7H4v16h9M14 6q8-6 12 4M21 8l5 4 3-5"/><path d="M17 16h13v14H17z" fill="#95999d"/></symbol>
  <symbol id="qh" viewBox="0 0 32 32"><path d="M14 13L2 29h14" stroke="#95999d"/><path d="M15 3l13 19v7h-5v-8h-4v8h-4z"/></symbol>
  <symbol id="qbox" viewBox="0 0 30 32"><path d="M4 14l8-11h13v16l-8 10H4zM4 14h13v15M17 14l8-11M12 3v11"/></symbol>
  <symbol id="redge" viewBox="0 0 28 32"><path d="M3 5h20v23H3z"/><path d="M0 2h6v6H0zM20 2h6v6h-6zM0 25h6v6H0zM20 25h6v6h-6z" fill="#26323a" stroke="none"/></symbol>
  <symbol id="upc" viewBox="0 0 28 28"><path d="M1 25h10q10 0 10-12V4M14 11l7-8 6 8"/></symbol>
  <symbol id="plus" viewBox="0 0 24 24"><path d="M12 1v22M1 12h22"/></symbol>
  <symbol id="minus" viewBox="0 0 24 24"><path d="M1 12h22"/></symbol>
  <!-- toolbox -->
  <symbol id="t0" viewBox="0 0 60 48"><path d="M23 7l21 18-9 4 5 8-4 4-6-9-7 3z" fill="#95999d"/></symbol>
  <symbol id="t1" viewBox="0 0 60 48"><path d="M12 10h38v28H12z" stroke-dasharray="6 4"/></symbol>
  <symbol id="t2" viewBox="0 0 60 48"><path d="M13 11l37-4v22L13 42z"/></symbol>
  <symbol id="t3" viewBox="0 0 60 48"><path d="M21 7l21-2v34l-21 7zM24 24l6-3"/></symbol>
  <symbol id="t4" viewBox="0 0 60 48"><path d="M15 11l31-2v25l-31 7zM31 10v27M15 26l31-5"/></symbol>
  <symbol id="t5" viewBox="0 0 60 48"><path d="M3 27l18 10 36-15-25-12-22 6 11 5z"/></symbol>
  <symbol id="t6" viewBox="0 0 60 48"><path d="M23 7l1 36q6 6 12 0l1-36"/><ellipse cx="30" cy="7" rx="7" ry="3"/></symbol>
  <symbol id="t7" viewBox="0 0 60 48"><path d="M8 11l42 12v14L12 22zM12 12v10M8 21l5 1M47 24h6M47 38h6"/></symbol>
  <symbol id="t8" viewBox="0 0 60 48"><path d="M3 28L14 8h32L25 42zM46 8l12 20-21-4"/></symbol>
  <symbol id="t9" viewBox="0 0 60 48"><path d="M5 15q22 16 51-9L21 43zM56 6l-6 32-15-9"/></symbol>
  <symbol id="t10" viewBox="0 0 60 48"><path d="M9 13l20-3 25 24-20 8z"/><path d="M7 24l21-5 26 5-20 8z"/></symbol>
  <symbol id="t11" viewBox="0 0 60 48"><path d="M11 8l41-3v30l-41 9zM27 7v33M41 6v31M11 18l41-4M11 33l41-5"/></symbol>
  <symbol id="t12" viewBox="0 0 60 48"><path d="M7 12l19-5 10 5-19 4zM17 16v7l10 4 19-5-10-5-19 6M36 12v5M27 27v7l9 6 19-8-9-4-19 6M46 22v6"/></symbol>
  <symbol id="t13" viewBox="0 0 60 48"><path d="M11 38V20L52 7v18M11 27l41-13M31 14v18" fill="none"/></symbol>
  <symbol id="t14" viewBox="0 0 60 48"><path d="M17 41V10l14-5v19M17 27l14-4 17 4-17 5zM31 32v14M48 27v14"/></symbol>
  <symbol id="t15" viewBox="0 0 60 48"><path d="M27 34q0-4-5-7-5-9 3-14 6-3 11 0 8 5 3 14-5 3-5 7v6q-4 4-7 0zM27 34h7M25 20l3 4 3-4 3 3M11 20h6M43 20h7M13 8l5 4M48 8l-5 4M13 34l5-4M48 34l-5-4"/></symbol>
  <symbol id="t16" viewBox="0 0 60 48"><path d="M30 9l20-3v23l-20 7" stroke="#95999d"/><path d="M13 11l17-2v27l-17 5z"/></symbol>
  <symbol id="t17" viewBox="0 0 60 48"><path d="M13 36Q14 8 40 5q1 13 8 22-8 4-17 16zM40 5q-14 12-9 38"/></symbol>
  <symbol id="t18" viewBox="0 0 60 48"><path d="M0 14l30-5q13 3 28 23l-20 8Q23 20 0 14zM20 23q14-4 28-3M26 31l26-5M15 12q17 6 34 24" stroke-width="2"/></symbol>
  <symbol id="t19" viewBox="0 0 60 48"><path d="M15 11l31-3v24l-31 8zM33 9v20l13 3M15 34l18-5"/></symbol>
  <symbol id="t20" viewBox="0 0 60 48"><path d="M11 7h28v14h12v20H39v-4H20v4h-9zM21 7v13q12 0 13-13M25 27h14M25 31h14"/></symbol>
  <symbol id="t21" viewBox="0 0 60 48"><path d="M4 23h31v12h21M35 23v12"/><path d="M11 19l6-7 5 7zM44 31l6-7 5 7z" fill="#85898d"/></symbol>
  <symbol id="t22" viewBox="0 0 60 48"><path d="M4 32h52"/><path d="M25 26l6-9 6 9z" fill="#85898d"/></symbol>
  <symbol id="t23" viewBox="0 0 60 48"><circle cx="30" cy="24" r="7"/><path d="M27 11l3-5 3 5zM27 37l3 5 3-5zM17 21l-6 3 6 3zM43 21l6 3-6 3z" fill="#85898d"/></symbol>
  <symbol id="t24" viewBox="0 0 60 48"><circle cx="30" cy="24" r="17"/><path d="M21 10v29M29 7v12M29 30v11M27 19h19M27 30h19M27 19v11"/></symbol>
  <symbol id="t25" viewBox="0 0 60 48"><path d="M9 7h32l14 13v20H9q-2 0-2-2V9q0-2 2-2zM41 7v12h14M16 31l14-16 5 2-15 15zM27 34h18"/></symbol>
  <symbol id="t26" viewBox="0 0 60 48"><path d="M15 8h27v17H15zM44 17l6-6v11zM31 26v14M31 27L17 40M31 27l14 13"/></symbol>
</svg>

<div class="window">
  <header class="titlebar">
    <div class="lights"><i></i><i></i><i></i></div>
    <h1><svg class="s30"><use href="#logo"/></svg>test <span class="redact wide"></span> - BIMcloud Basic für Archicad 29, Nutzer<span class="redact"></span></h1>
  </header>

  <div class="toolbar" role="toolbar" aria-label="Standard">
    <i class="grip"></i>
    <button class="tool"><svg><use href="#home"/></svg></button><i class="sep"></i>
    <button class="tool"><svg><use href="#save"/></svg></button><i class="sep"></i>
    <button class="tool"><svg><use href="#undo"/></svg></button>
    <button class="tool"><svg><use href="#redo"/></svg></button><i class="sep"></i>
    <button class="tool on"><svg><use href="#snapsel"/></svg></button>
    <button class="tool"><svg><use href="#pip"/></svg></button>
    <button class="tool"><svg><use href="#syr"/></svg></button>
    <button class="tool"><svg><use href="#trans"/></svg></button><i class="sep"></i>
    <button class="tool"><svg><use href="#xo"/></svg></button>
    <button class="tool"><svg><use href="#meas"/></svg></button>
    <button class="tool on"><svg><use href="#setsq"/></svg></button><button class="drop on"><svg><use href="#cd"/></svg></button>
    <button class="tool on"><svg><use href="#guide"/></svg></button><button class="drop on"><svg><use href="#cd"/></svg></button>
    <button class="tool on"><svg><use href="#xy"/></svg></button><button class="drop on"><svg><use href="#cd"/></svg></button>
    <button class="tool"><svg><use href="#grid"/></svg></button><button class="drop"><svg><use href="#cd"/></svg></button>
    <button class="tool"><svg><use href="#persp"/></svg></button><button class="drop"><svg><use href="#cd"/></svg></button>
    <button class="tool"><svg><use href="#gridel"/></svg></button><button class="drop"><svg><use href="#cd"/></svg></button>
    <button class="tool"><svg><use href="#stamp"/></svg></button><button class="drop"><svg><use href="#cd"/></svg></button>
    <button class="tool"><svg><use href="#trace"/></svg></button><button class="drop"><svg><use href="#cd"/></svg></button>
    <button class="tool"><svg><use href="#cutp"/></svg></button><button class="drop"><svg><use href="#cd"/></svg></button>
    <button class="tool on"><svg><use href="#group"/></svg></button><button class="drop on"><svg><use href="#cd"/></svg></button><i class="sep"></i>
    <button class="tool"><svg><use href="#star"/></svg></button>
    <button class="tool"><svg><use href="#houses"/></svg></button>
    <button class="tool"><svg><use href="#hwin"/></svg></button>
    <button class="tool"><svg><use href="#key"/></svg></button>
    <button class="tool"><svg><use href="#cloud"/></svg></button>
    <button class="tool"><svg><use href="#flag"/></svg></button>
    <button class="tool"><svg><use href="#tags"/></svg></button>
    <button class="tool"><svg><use href="#pens"/></svg></button><button class="drop"><svg><use href="#cd"/></svg></button>
    <button class="tool"><svg><use href="#comp"/></svg></button><button class="drop"><svg><use href="#cd"/></svg></button><i class="sep"></i>
    <button class="tool"><svg><use href="#sciss"/></svg></button>
    <button class="tool"><svg><use href="#axe"/></svg></button>
    <button class="tool"><svg><use href="#extrude"/></svg></button>
    <button class="tool"><svg><use href="#resize"/></svg></button>
    <button class="tool"><svg><use href="#stretch"/></svg></button>
    <button class="tool"><svg><use href="#corner"/></svg></button>
    <button class="tool"><svg><use href="#fillet"/></svg></button>
    <button class="tool"><svg><use href="#roofh"/></svg></button><i class="sep"></i>
    <button class="tool"><svg><use href="#wx"/></svg></button>
    <button class="tool"><svg><use href="#wx2"/></svg></button><i class="sep dark"></i>
    <button class="tool"><svg><use href="#mv"/></svg></button><button class="drop"><svg><use href="#cd"/></svg></button>
    <button class="tool"><svg><use href="#rot"/></svg></button><button class="drop"><svg><use href="#cd"/></svg></button>
    <button class="tool"><svg><use href="#mir"/></svg></button><button class="drop"><svg><use href="#cd"/></svg></button>
    <button class="tool"><svg><use href="#mult"/></svg></button>
  </div>

  <div class="infobox">
    <section>
      <h2>Haupt:</h2>
      <div class="main-info">
        <div class="stack"><span class="small">Alle aktiven: 1</span>
          <div class="row g4">
            <button class="btn b80"><svg class="s36"><use href="#i1"/></svg><svg class="ch"><use href="#cr"/></svg></button>
            <button class="btn b80"><svg class="s38"><use href="#i2"/></svg><svg class="ch"><use href="#cr"/></svg></button>
            <button class="btn b80 solo"><svg class="s36"><use href="#magnet"/></svg></button>
          </div>
        </div>
        <button class="btn b96"><svg class="s36"><use href="#arrow"/></svg><svg class="ch"><use href="#cr"/></svg></button>
      </div>
    </section>
    <section>
      <h2>Ebene:</h2>
      <button class="btn wide-btn"><svg class="s36"><use href="#eye"/></svg><span>10 Wand außen</span><svg class="ch"><use href="#cr"/></svg></button>
    </section>
    <section>
      <h2>Geometriemethode:</h2>
      <div class="row g5">
        <button class="geo on"><svg class="s44"><use href="#g1"/></svg><svg class="ch"><use href="#cr"/></svg></button>
        <button class="geo off"><svg class="s44"><use href="#g2"/></svg><svg class="ch"><use href="#cr"/></svg></button>
        <button class="geo solo"><svg class="s44"><use href="#g3"/></svg></button>
        <button class="geo off solo"><svg class="s44"><use href="#g4"/></svg></button>
      </div>
    </section>
    <section>
      <h2>Lage der Referenzlinie:</h2>
      <div class="row g5">
        <button class="btn b260"><svg class="s40"><use href="#ref"/></svg><span>Kern Außen</span><svg class="ch"><use href="#cr"/></svg></button>
        <button class="btn b84 solo"><svg class="s44"><use href="#flip"/></svg></button>
      </div>
    </section>
    <section>
      <h2>Struktur:</h2>
      <div class="row g5">
        <button class="btn b84"><svg class="s36"><use href="#col"/></svg><svg class="ch"><use href="#cr"/></svg></button>
        <button class="btn b260 struct"><svg class="s50"><use href="#hlz"/></svg><span>HLZ + Luftsc...</span><svg class="ch"><use href="#cr"/></svg></button>
      </div>
    </section>
    <section>
      <h2>Wandstärke:</h2>
      <div class="row thickness">
        <svg class="s48"><use href="#thick"/></svg>
        <input class="field" type="text" value="0,545" disabled aria-label="Wandstärke">
      </div>
    </section>
    <section>
      <h2>Unter- und Oberkante:</h2>
      <div class="row edges">
        <svg class="s64"><use href="#height"/></svg>
        <div class="stack g5">
          <input class="field" type="text" value="3,150" disabled aria-label="Oberkante">
          <input class="field" type="text" value="-0,150" aria-label="Unterkante">
        </div>
        <button class="btn mini"><svg class="ch"><use href="#cr"/></svg></button>
      </div>
    </section>
    <section>
      <h2>Verknüpfte Geschosse:</h2>
      <div class="stack linked">
        <div class="row"><svg class="s46"><use href="#link"/></svg><span>1. Geschoss (Urspr...</span><button class="btn mini"><svg class="ch"><use href="#cr"/></svg></button></div>
        <div class="row"><svg class="s46"><use href="#eg"/></svg><span>0. EG</span><button class="btn mini"><svg class="ch"><use href="#cr"/></svg></button></div>
      </div>
    </section>
    <section>
      <h2>ID und Eigenschaften:</h2>
      <input class="field idfield" type="text" value="Wand-006" aria-label="ID">
    </section>
  </div>

  <div class="body">
    <nav class="toolbox">
      <i class="handle"></i>
      <ul>
        <li class="sel"><svg><use href="#t0"/></svg>Pfeil</li>
        <li><svg><use href="#t1"/></svg>Markierungsrahmen</li>
      </ul>
      <h3><svg><use href="#tri"/></svg>Planung</h3>
      <ul>
        <li><svg><use href="#t2"/></svg>Wand</li>
        <li><svg><use href="#t3"/></svg>Tür</li>
        <li><svg><use href="#t4"/></svg>Fenster</li>
        <li><svg><use href="#t5"/></svg>Decke</li>
        <li><svg><use href="#t6"/></svg>Stütze</li>
        <li><svg><use href="#t7"/></svg>Träger</li>
        <li><svg><use href="#t8"/></svg>Dach</li>
        <li><svg><use href="#t9"/></svg>Schale</li>
        <li><svg><use href="#t10"/></svg>Dachfenster</li>
        <li><svg><use href="#t11"/></svg>Fassade</li>
        <li><svg><use href="#t12"/></svg>Treppe</li>
        <li><svg><use href="#t13"/></svg>Geländer</li>
        <li><svg><use href="#t14"/></svg>Objekt</li>
        <li><svg><use href="#t15"/></svg>Lichtquelle</li>
        <li><svg><use href="#t16"/></svg>Wandabschluss</li>
        <li><svg><use href="#t17"/></svg>Morph</li>
        <li><svg><use href="#t18"/></svg>Freifläche</li>
        <li><svg><use href="#t19"/></svg>Öffnung</li>
        <li><svg><use href="#t20"/></svg>Raum</li>
      </ul>
      <h3><svg><use href="#tri"/></svg>Sichten</h3>
      <div class="views">
        <ul class="muted">
          <li><svg><use href="#t21"/></svg>Schnitt</li>
          <li><svg><use href="#t22"/></svg>Ansicht</li>
          <li><svg><use href="#t23"/></svg>Innenansicht</li>
          <li><svg><use href="#t24"/></svg>Detail</li>
          <li><svg><use href="#t25"/></svg>Arbeitsblatt</li>
          <li><svg><use href="#t26"/></svg>Kamera</li>
        </ul>
        <div class="track"><i></i></div>
      </div>
      <h3><svg><use href="#trir"/></svg>Dokumentation</h3>
    </nav>

    <main class="center">
      <div class="tabs">
        <button class="overview"><svg class="s38"><use href="#four"/></svg></button>
        <button class="tab"><svg class="s36"><use href="#plan"/></svg>0. EG [0. EG]</button>
        <button class="tab"><svg class="s36"><use href="#sec"/></svg>[S-01 Schnitt]</button>
        <button class="tab"><svg class="s36"><use href="#elev"/></svg>[A-01 Ansicht]</button>
        <button class="tab active"><svg class="s36"><use href="#box3"/></svg>[3D / Alle]</button>
        <button class="tab"><svg class="s36"><use href="#light"/></svg>[Aktions-Center]</button>
        <button class="tabmenu"><svg class="s46"><use href="#hlist"/></svg><svg class="ch"><use href="#cd"/></svg></button>
      </div>
      <div class="canvas">
        <svg class="model" viewBox="426 372 2144 1560">
          <path d="M755 1052L1400 936v198L1016 1242z" fill="#a2a2a2"/>
          <path d="M740 1043l567-99v10l-552 98z" fill="#c7967e"/>
          <path d="M742 1045l565-99v4l-560 98z" fill="#c9b573"/>
          <path d="M740 1048v-5l567-98M747 1048l560-98M755 1052l552-98M1016 1242l291-82" stroke="#000" fill="none"/>
          <path d="M740 1044l567-98" stroke="#000" stroke-width="2"/>
          <path d="M1776 1195l64 23 25-10v-13z" fill="#a2a2a2"/>
          <path d="M1842 1195v22l9-4v-18z" fill="#84604f"/><path d="M1851 1195v18l7-3v-15z" fill="#c9b573"/>
          <path d="M1776 1195l64 24 25-11v-13M1842 1195v22M1851 1195v18M1858 1195v15" stroke="#000" stroke-width="2" fill="none"/>
          <path d="M2140 1195l48 51 95 30 3-14 6-4v-9l-7-1 2-9-8-1 2-9-8-1 2-9-8-1 2-8-9-1 2-7-8-1v-6z" fill="#b84cc4" stroke="#a43aae"/>
          <path d="M2216 1195l67 81" stroke="#8f3598" fill="none"/>
          <path d="M717 1053l228 200 53 331-228-282z" fill="#ac66b4"/>
          <path d="M717 1053l52-9 244 190-68 19z" fill="#cb70b8"/>
          <path d="M945 1253l68-19 45 324-60 26z" fill="#b45fa8"/>
          <path d="M967 1248l18-5 46 326-15 6z" fill="#c274b0"/>
          <path d="M717 1053l28-5 218 201-18 4z" fill="#b87fcb"/>
          <g fill="none" stroke="#738b73">
            <path d="M733 1056l52 244" stroke-width="9"/>
            <path d="M751 1056l45 238" stroke-width="4" opacity=".6"/>
            <path d="M769 1044l48 244M817 1288l241 270" stroke-width="5"/>
            <path d="M785 1300l227 279" stroke-width="7"/>
          </g>
          <path d="M796 1294l235 275" stroke="#5a4fb8" stroke-width="6"/>
          <path d="M717 1053l52-9 244 190 45 324-60 26-228-282zl228 200 53 331M945 1253l68-19M751 1049l233 195 47 325M963 1251l49 325M967 1249l50 326" fill="none" stroke="#55b832" stroke-width="4"/>
          <path d="M731 1051l232 199" stroke="#55b832" stroke-width="7"/>
          <g fill="#5b5360" opacity=".8"><circle cx="796" cy="1294" r="6"/><circle cx="817" cy="1288" r="6"/></g>
          <g fill="#000"><circle cx="717" cy="1053" r="7"/><circle cx="769" cy="1044" r="7"/><circle cx="1013" cy="1234" r="7"/><circle cx="945" cy="1253" r="7"/><circle cx="770" cy="1302" r="7"/><circle cx="998" cy="1584" r="7"/><circle cx="1031" cy="1569" r="7"/><circle cx="1058" cy="1558" r="7"/></g>
        </svg>
        <i class="dock top"></i><i class="dock bottom"></i><i class="dock left"></i><i class="dock right"></i>

        <section class="dialog">
          <header><button class="close" aria-label="Schließen"></button><h2>Suchen &amp; aktivieren</h2></header>
          <div class="setrow">
            <label for="set">Kriterien-Set-Name:</label>
            <span class="pick"><select id="set" class="btn"><option>Individuell</option></select><svg class="blue"><use href="#ud"/></svg></span>
            <button class="btn b40"><svg class="ch"><use href="#cr"/></svg></button>
          </div>
          <hr>
          <div class="criteria">
            <table>
              <colgroup><col class="c1"><col class="c2"><col><col class="c4"></colgroup>
              <thead><tr><th>Kriterien</th><th></th><th>Wert</th><th></th></tr></thead>
              <tbody>
                <tr><td>Elementtyp</td><td>ist</td><td class="ind">Alle Typen</td><td></td></tr>
                <tr class="sel"><td>Variante fehlt</td><td>ist</td><td><div class="valcell">Wahr<button class="btn mini"><svg class="ch"><use href="#cr"/></svg></button></div></td><td></td></tr>
              </tbody>
            </table>
            <svg class="marker" viewBox="0 0 990 60"><defs><filter id="rough" x="-2%" y="-20%" width="104%" height="140%"><feTurbulence type="fractalNoise" baseFrequency=".25" numOctaves="2" seed="4"/><feDisplacementMap in="SourceGraphic" scale="9"/></filter></defs><path d="M5 7h980v46H5z" fill="none" stroke="#ea4bf2" stroke-width="8" filter="url(#rough)"/></svg>
          </div>
          <div class="actions">
            <button class="btn split"><span>Hinzufügen...</span><i></i><svg class="ch"><use href="#cd"/></svg></button>
            <button class="btn remove">Entfernen</button>
            <button class="btn pair on first"><svg class="s28"><use href="#pip"/></svg><svg class="s28"><use href="#upc"/></svg></button>
            <button class="btn pair"><svg class="s28"><use href="#redge"/></svg><svg class="s28"><use href="#upc"/></svg></button>
          </div>
          <hr>
          <div class="result">
            <dl><dt>Ausgewählte:</dt><dd>1</dd><dt>Bearbeitbar:</dt><dd>1</dd></dl>
            <div class="selbtns"><button class="btn" aria-label="Minus"><svg class="s24"><use href="#minus"/></svg></button><span>Auswahl</span><button class="btn" aria-label="Plus"><svg class="s24"><use href="#plus"/></svg></button></div>
          </div>
        </section>
      </div>
      <div class="quick">
        <div class="qz"><svg class="s36"><use href="#qz1"/></svg><svg class="s36 off"><use href="#qz2"/></svg><svg class="s36"><use href="#qz3"/></svg></div>
        <div class="qn"><svg class="s36"><use href="#qorb"/></svg><svg class="s24"><use href="#qwalk"/></svg></div>
        <button class="q dis"><svg class="s36 keep"><use href="#qfit"/></svg><span>keine D...</span><svg class="ch"><use href="#cr"/></svg></button>
        <button class="q dis"><svg class="s36"><use href="#qrot"/></svg><span>keine D...</span><svg class="ch"><use href="#cr"/></svg></button>
        <button class="q num"><svg class="s32"><use href="#ruler"/></svg><span>1:100</span><svg class="ch"><use href="#cr"/></svg></button>
        <button class="q"><svg class="s32"><use href="#layers"/></svg><span>00 Arb...</span><svg class="ch"><use href="#cr"/></svg></button>
        <button class="q"><svg class="s28"><use href="#qfill"/></svg><span>Komple...</span><svg class="ch"><use href="#cr"/></svg></button>
        <button class="q"><svg class="s30"><use href="#qpen"/></svg><span>04 S/W...</span><svg class="ch"><use href="#cr"/></svg></button>
        <button class="q"><svg class="s30"><use href="#frame"/></svg><span>00 Arb...</span><svg class="ch"><use href="#cr"/></svg></button>
        <button class="q"><svg class="s32"><use href="#qren"/></svg><span>Keine...</span><svg class="ch"><use href="#cr"/></svg></button>
        <button class="q"><svg class="s32"><use href="#qh"/></svg><span>00 Rei...</span><svg class="ch"><use href="#cr"/></svg></button>
        <button class="q"><svg class="s32"><use href="#houses"/></svg><span>Nur Ha...</span><svg class="ch"><use href="#cr"/></svg></button>
        <button class="q last"><svg class="s30"><use href="#qbox"/></svg><span>Schatti...</span><svg class="ch"><use href="#cr"/></svg></button>
      </div>
    </main>

    <aside class="teamwork">
      <i class="handle"></i><i class="redact name"></i>
      <div class="online"><svg class="s38"><use href="#hex"/></svg><span>Online</span><button class="btn mini"><svg class="ch"><use href="#cr"/></svg></button></div>
      <h3><svg><use href="#tri"/></svg>Arbeitsbereich</h3>
      <div class="act"><svg class="s38"><use href="#sync"/></svg><button class="btn split send"><svg class="s36"><use href="#send"/></svg><span>Senden &amp; empfang...</span><i></i><svg class="ch"><use href="#cd"/></svg></button></div>
      <hr>
      <div class="act"><svg class="s34 wide38"><use href="#dn"/></svg><button class="btn split"><span>Reservieren...</span><i></i><svg class="ch"><use href="#cd"/></svg></button></div>
      <div class="act"><svg class="s34 wide38"><use href="#up"/></svg><button class="btn split"><span>Freigeben</span><i></i><svg class="ch"><use href="#cd"/></svg></button></div>
      <hr>
      <label class="lbl" for="col-ws">Farbiger Arbeitsbereich</label>
      <div class="act colour"><svg class="s32 wide38"><use href="#pie"/></svg><span class="pick"><select id="col-ws" class="btn"><option>Alle mit Originalfarbe</option></select><svg class="blk"><use href="#ud"/></svg></span></div>
      <button class="btn full">Mein Arbeitsbereich</button>
      <h3><svg><use href="#tri"/></svg>Nutzer</h3>
      <div class="thead users"><i></i><span class="c"><svg class="s32"><use href="#pie"/></svg></span><span class="n">Name</span></div>
      <div class="tbody ubody"><i class="redact list"></i></div>
      <div class="icons"><button class="btn dimbtn"><svg class="s36"><use href="#px"/></svg></button><span></span><button><svg class="s38"><use href="#mailp"/></svg></button><button class="dim"><svg class="s32"><use href="#pie"/></svg></button><button class="dim"><svg class="s38"><use href="#pc"/></svg></button></div>
      <h3><svg><use href="#tri"/></svg>Nachrichten</h3>
      <div class="icons msg"><button class="on"><svg class="s38"><use href="#mail"/></svg></button><button><svg class="s34"><use href="#outm"/></svg></button><button><svg class="s38"><use href="#mailk"/></svg></button></div>
      <div class="thead msgs"><span class="v">Von</span><span class="w">Wann<svg><use href="#tri"/></svg></span></div>
      <div class="tbody grow"></div>
      <div class="icons"><span></span><button><svg class="s38"><use href="#mailp"/></svg></button><button class="dim"><svg class="s38"><use href="#mailr"/></svg></button><button class="dim"><svg class="s38"><use href="#mailc"/></svg></button></div>
      <h3><svg><use href="#trir"/></svg>Nachverfolgte Änderungen</h3>
    </aside>

    <aside class="navigator">
      <i class="handle"></i>
      <div class="maps"><button><svg class="s38"><use href="#hs"/></svg></button><i></i><button class="on"><svg class="s38"><use href="#hsbox"/></svg></button><button><svg class="s38"><use href="#lay"/></svg></button><button><svg class="s38"><use href="#pub"/></svg></button><button class="btn b66"><svg class="s26"><use href="#menu"/></svg><svg class="ch"><use href="#cr"/></svg></button></div>
      <div class="search"><label><svg class="s28"><use href="#mag"/></svg><input type="search" placeholder="Ausschnitt-Mapp" aria-label="Suchen"></label><button class="btn b66"><svg class="s38"><use href="#peye"/></svg><svg class="ch"><use href="#cr"/></svg></button></div>
      <div class="treebox">
        <ul class="tree">
          <li><svg class="ch"><use href="#cd"/></svg><svg class="s36 bl"><use href="#hsbox"/></svg>test</li>
          <li class="l1"><svg class="ch"><use href="#cd"/></svg><svg class="s36"><use href="#fold"/></svg>Beispielausschnitte</li>
          <li class="l2"><svg class="ch"><use href="#cd"/></svg><svg class="s36"><use href="#fold"/></svg>Arbeitseinstellung</li>
          <li class="l3"><svg class="ch"><use href="#cd"/></svg><svg class="s36"><use href="#planl"/></svg>Geschosse</li>
          <li class="l4"><svg class="ch"></svg><svg class="s36"><use href="#plan"/></svg>3. OG</li>
          <li class="l4"><svg class="ch"></svg><svg class="s36"><use href="#plan"/></svg>2. Geschoss</li>
          <li class="l4"><svg class="ch"></svg><svg class="s36"><use href="#plang"/></svg>1. Geschoss</li>
          <li class="l4 sel"><svg class="ch"></svg><svg class="s36"><use href="#plan"/></svg>0. EG</li>
          <li class="l4"><svg class="ch"></svg><svg class="s36"><use href="#plan"/></svg>-1. UG</li>
          <li class="l3"><svg class="ch"><use href="#cr"/></svg><svg class="s36"><use href="#hl"/></svg>Ansichten</li>
          <li class="l3"><svg class="ch"><use href="#cr"/></svg><svg class="s36"><use href="#hl"/></svg>Schnitte</li>
        </ul>
        <div class="vbar"><i></i></div>
        <div class="hbar"><i></i></div>
      </div>
      <div class="navtools"><button><svg class="s42"><use href="#navp"/></svg></button><button><svg class="s42"><use href="#navl"/></svg></button><button><svg class="s42"><use href="#navf"/></svg></button><button><svg class="s30"><use href="#card"/></svg></button><button><svg class="s32"><use href="#del"/></svg></button></div>
      <h3><svg><use href="#tri"/></svg>Beschreibungen</h3>
      <ul class="desc">
        <li><svg class="s30"><use href="#d1"/></svg>0. EG</li>
        <li><svg class="s30"><use href="#layers"/></svg>00 Arbeitseinstellung</li>
        <li><svg class="s30"><use href="#ruler"/></svg>1:100</li>
        <li><svg class="s30"><use href="#frame"/></svg>00 Arbeitseinstellung</li>
      </ul>
      <button class="btn full">Einstellungen...</button>
      <h3><svg><use href="#tri"/></svg>Teamwork-Status</h3>
      <div class="status"><i></i>Frei zur Reservierung</div>
      <button class="btn full">Reservieren</button>
      <div class="tracer">
        <i class="handle"></i>
        <div class="trow"><button class="btn b56 solo" disabled><svg class="s36"><use href="#trace"/></svg></button><button class="btn rest" disabled><svg class="ch"><use href="#cr"/></svg></button></div>
        <div class="ticons dim"><svg class="s36"><use href="#tr1"/></svg><span></span><svg class="s36"><use href="#trm"/></svg><svg class="s36"><use href="#trr"/></svg><svg class="s36"><use href="#trb"/></svg><svg class="s36"><use href="#trc"/></svg></div>
        <hr>
        <label for="r1">Transparentpause:</label>
        <div class="srow"><button class="btn b56" disabled><i class="red"></i><svg class="ch"><use href="#cr"/></svg></button><span class="slider"><input id="r1" type="range" max="10" value="10" disabled><i></i></span><button class="btn b28" disabled><svg class="ch"><use href="#cr"/></svg></button></div>
        <label for="r2">Aktiv:</label>
        <div class="srow"><button class="btn b56" disabled><svg class="s28 g"><use href="#pie3"/></svg><svg class="ch"><use href="#cr"/></svg></button><span class="slider"><input id="r2" type="range" max="10" value="10" disabled><i></i></span><span class="b28"></span></div>
        <hr>
        <div class="tfoot dim"><svg class="s38"><use href="#hand"/></svg><svg class="s38"><use href="#ovl"/></svg><svg class="s38"><use href="#spl"/></svg><svg class="s38"><use href="#hid"/></svg></div>
      </div>
    </aside>
  </div>

  <footer class="statusbar">
    <svg class="s36"><use href="#hex"/></svg>
    <svg class="s36 wins"><use href="#wins"/></svg><i></i>
    <a href="#id">GRAPHISOFT <span>ID</span></a>
  </footer>
</div>
</body>
</html>
```
FILE: styles.css
```css
* { box-sizing: border-box; margin: 0; padding: 0; }
:root { --ink: #26323a; --bg: #ececec; --line: #d4d4d4; --sel: #c0bfc4; --head: #d6d6d6; }
body {
  display: flex;
  height: 100vh;
  min-height: 2166px;
  padding: 76px 112px 148px;
  background: #fff;
  color: #222;
  font: 22px/28px Inter, "Liberation Sans", sans-serif;
}
button, input, select { font: inherit; color: inherit; border: 0; background: none; }
ul { list-style: none; }
h1, h2, h3 { font-weight: 400; font-size: inherit; }
i { font-style: normal; }
svg { fill: none; stroke: var(--ink); stroke-width: 2.5; flex: none; display: block; }
.sprite { position: absolute; width: 0; height: 0; }
hr { border: 0; height: 2px; background: var(--line); }

.s24 { width: 24px; height: 32px; } .s26 { width: 26px; height: 24px; } .s28 { width: 28px; height: 32px; }
.s30 { width: 30px; height: 32px; } .s32 { width: 32px; height: 32px; } .s34 { width: 34px; height: 34px; }
.s36 { width: 36px; height: 36px; } .s38 { width: 38px; height: 38px; } .s40 { width: 40px; height: 36px; }
.s42 { width: 42px; height: 38px; } .s44 { width: 44px; height: 44px; } .s46 { width: 46px; height: 28px; }
.s48 { width: 36px; height: 48px; } .s50 { width: 46px; height: 50px; } .s64 { width: 64px; height: 60px; }
.wide38 { width: 38px; }
.ch { width: 18px; height: 18px; stroke: #1f1f1f; }

.btn {
  display: flex; align-items: center; justify-content: center;
  background: #fff; border-radius: 11px;
  box-shadow: 0 1px 3px rgba(0, 0, 0, .3);
}
.btn:disabled { background: #f5f5f5; box-shadow: 0 1px 3px rgba(0, 0, 0, .18); }
.btn:disabled .ch { stroke: #8f8f8f; }
.on { background: var(--sel); }
.off, .dim { opacity: .5; }
.row { display: flex; align-items: center; }
.stack { display: flex; flex-direction: column; }
.g4 { gap: 4px; } .g5 { gap: 5px; }
.redact { background: #919191; }

.window {
  flex: 1; min-width: 0; display: flex; flex-direction: column;
  background: var(--bg); border-radius: 24px; overflow: hidden;
  box-shadow: 0 0 2px rgba(0, 0, 0, .6), 0 36px 84px rgba(0, 0, 0, .42);
}

/* title bar */
.titlebar { display: flex; align-items: center; height: 57px; background: #f3f4f6; border-bottom: 2px solid #cbcbcb; }
.lights { display: flex; gap: 16px; padding-left: 16px; width: 160px; }
.lights i { width: 24px; height: 24px; border-radius: 50%; background: #dadbdd; border: 1px solid #c6c7c8; }
.titlebar h1 { flex: 1; display: flex; align-items: center; justify-content: center; padding-right: 166px; font-size: 26px; font-weight: 700; color: #454545; white-space: pre; }
.titlebar h1 svg { margin-right: 9px; }
.titlebar .redact { width: 134px; height: 53px; }
.titlebar .redact.wide { width: 286px; margin-left: -4px; }

/* main toolbar */
.toolbar { display: flex; align-items: center; gap: 7px; height: 74px; overflow: hidden; border-bottom: 2px solid #e3e3e3; padding-bottom: 4px; }
.toolbar > * { flex: none; }
.grip { width: 2px; height: 28px; margin: 0 7px; background: #a8a8a8; }
.tool { display: flex; align-items: center; justify-content: center; width: 53px; height: 52px; border-radius: 10px; }
.tool svg { width: 36px; height: 36px; }
.drop { display: flex; align-items: center; justify-content: center; width: 23px; height: 52px; border-radius: 8px; }
.drop svg { width: 20px; height: 20px; stroke: #1f1f1f; }
.sep { width: 15px; height: 44px; background: linear-gradient(#cfcfcf, #cfcfcf) center / 2px 100% no-repeat; }
.sep.dark { height: 28px; background-image: linear-gradient(#a0a0a0, #a0a0a0); }

/* info box */
.infobox { display: flex; height: 121px; overflow: hidden; border-bottom: 2px solid #e3e3e3; padding-left: 10px; background: linear-gradient(#a8a8a8, #a8a8a8) 7px 38px / 2px 46px no-repeat; }
.infobox section { flex: none; width: 370px; padding: 2px 8px 0; border-right: 2px solid var(--line); }
.infobox section:last-child { border: 0; }
.infobox h2, .small { font-size: 18px; line-height: 28px; height: 28px; }
.infobox h2 + * { margin-top: 17px; }
.infobox .main-info { display: flex; align-items: flex-end; gap: 4px; margin-top: 6px; padding-left: 2px; }
.small { margin-left: -2px; line-height: 26px; }
.infobox .stack .btn { height: 40px; }
.b80, .b84, .b96, .geo { justify-content: space-between; }
.btn.solo, .geo.solo { justify-content: center; padding: 0; }
.b80 { width: 80px; padding-left: 7px; }
.b96 { width: 96px; height: 56px; padding-left: 18px; }
.b84 { width: 84px; padding-left: 12px; }
.infobox h2 + .btn, .infobox .b260, .infobox .b84 { height: 56px; }
.wide-btn { width: 350px; padding: 0 2px 0 12px; }
.wide-btn span, .b260 span { flex: 1; text-align: left; padding-left: 4px; }
.b260 { width: 260px; padding: 0 0 0 8px; }
.struct { padding-left: 20px; } .struct span { padding-left: 18px; white-space: nowrap; }
.geo { display: flex; align-items: center; width: 84px; height: 54px; padding-left: 11px; border-radius: 8px; }
.field { height: 33px; padding: 0 8px; background: #fff; border-bottom: 2px solid #b9b9b9; outline: 1px solid #e2e2e2; }
.field:disabled { background: #f5f5f5; color: #b9b9b9; border-color: #d6d6d6; }
.thickness { padding-left: 26px; gap: 28px; }
.infobox .thickness { margin-top: 22px; align-items: flex-start; }
.thickness .field { width: 261px; margin-top: 2px; }
.edges { padding-left: 6px; gap: 10px; }
.infobox .edges, .infobox .linked { margin-top: 8px; }
.edges .g5 { gap: 9px; }
.edges .s64 { margin: 6px 9px 0 0; }
.edges .field { width: 220px; }
.mini { width: 34px; height: 32px; border-radius: 9px; }
.linked { gap: 10px; padding-left: 18px; }
.linked span { flex: 1; padding-left: 24px; white-space: nowrap; }
.infobox .linked .btn { height: 32px; }
.idfield { width: 260px; height: 42px; }
.infobox .idfield { margin-top: 22px; }

/* body columns */
.body { flex: 1; min-height: 0; display: flex; border-bottom: 2px solid #e1e1e1; }
.handle { display: block; width: 140px; height: 3px; margin: 0 auto; background: #a9a9a9; flex: none; }
h3 { display: flex; align-items: center; flex: none; background: var(--head); border-radius: 6px; }
h3 svg { width: 18px; height: 18px; }

.toolbox { width: 314px; display: flex; flex-direction: column; padding-top: 9px; background: #eff0f2; border-right: 3px solid #e4e4e4; color: #000; }
.toolbox .handle { width: 118px; margin-bottom: 4px; }
.toolbox ul { padding: 0 1px 0 4px; margin-bottom: 2px; }
.toolbox li { display: flex; align-items: center; height: 56px; gap: 17px; padding-left: 12px; }
.toolbox li svg { width: 60px; height: 48px; stroke-width: 2; }
.toolbox li:not(.sel) svg { fill: #fbfbfb; }
.toolbox li.sel { height: 50px; margin-bottom: 4px; background: var(--sel); border-radius: 10px; }
.toolbox h3 { height: 40px; gap: 16px; padding-left: 11px; margin-bottom: 2px; color: #222; }
.toolbox h3:last-child { height: 38px; margin: 0; }
.views { flex: 1; min-height: 0; display: flex; overflow: hidden; }
.views ul { flex: 1; }
.muted { color: #808284; }
.toolbox .muted li svg { stroke: #85898d; fill: none; }
.track { width: 19px; background: #fafafa; border-left: 2px solid #e4e4e4; padding: 8px 2px; margin-right: 1px; }
.track i { display: block; width: 12px; height: 254px; margin: auto; border-radius: 6px; background: #7d7d7d; }

.center { flex: 1; min-width: 0; display: flex; flex-direction: column; }
.tabs { display: flex; height: 44px; background: #e6e6e6; }
.tabs > * { display: flex; align-items: center; justify-content: center; }
.overview { width: 65px; }
.tab { flex: 0 1 394px; gap: 4px; border-left: 2px solid #b4b4b4; color: #3c3c3c; }
.tab.active, .tab.active + .tab { border-color: transparent; }
.tab.active { background: #fff; color: #222; }
.tab.active + .tab { flex: 1; }
.tabmenu { width: 102px; background: #f7f7f7; border-left: 2px solid #b4b4b4; gap: 12px; padding-left: 10px; }
.canvas { position: relative; flex: 1; min-height: 0; background: #fff; overflow: hidden; }
.model { position: absolute; left: 0; top: 0; width: 2144px; height: 1560px; stroke: none; stroke-width: 1; }
.dock { position: absolute; background: #ededed; }
.dock::after { content: ""; position: absolute; inset: 0; background: repeating-linear-gradient(90deg, #ef8432 0 10px, transparent 10px 14px) 6px center / 52px 3px no-repeat; }
.dock.top, .dock.bottom { left: calc(50% - 32px); width: 64px; height: 32px; }
.dock.top { top: 2px; } .dock.bottom { bottom: 2px; }
.dock.top::after { background-image: repeating-linear-gradient(90deg, #b0b0b0 0 10px, transparent 10px 14px); }
.dock.left, .dock.right { top: calc(50% - 32px); height: 64px; width: 31px; }
.dock.left { left: 2px; } .dock.right { right: 0; }
.dock.left::after, .dock.right::after { background: repeating-linear-gradient(#ef8432 0 10px, transparent 10px 14px) center 6px / 3px 52px no-repeat; }

/* find & select */
.dialog { position: absolute; left: 881px; top: 263px; width: 1156px; padding-bottom: 4px; background: var(--bg); outline: 1px solid #dcdcdc; color: #222; }
.dialog header { display: flex; align-items: center; height: 32px; padding-left: 9px; background: linear-gradient(#e9e9e9, #dcdcdc); }
.dialog header h2 { flex: 1; text-align: center; color: #111; }
.close { width: 18px; height: 18px; border-radius: 50%; background: #ec6a5e; }
.setrow { display: flex; align-items: center; height: 40px; margin: 16px 8px 18px 7px; }
.setrow label { width: 261px; }
.pick { position: relative; display: flex; flex: 1; }
.pick select { flex: 1; height: 40px; padding: 0 16px; appearance: none; }
.pick svg { position: absolute; right: 4px; top: 3px; width: 32px; height: 34px; pointer-events: none; }
.blue { background: #3f80f6; border-radius: 8px; stroke: #fff; padding: 4px; }
.b40 { width: 40px; height: 40px; margin-left: 9px; }
.dialog hr { margin: 0 6px; }
.criteria { position: relative; height: 246px; margin: 7px 6px 0; background: linear-gradient(90deg, #fff 1114px, #e4e4e4 1114px 1116px, #fafafa 1116px); }
.criteria table { width: 1144px; border-collapse: collapse; table-layout: fixed; color: #000; }
.c1 { width: 273px; } .c2 { width: 118px; } .c4 { width: 30px; }
.criteria th { height: 34px; padding-left: 3px; font-weight: 400; text-align: left; background: linear-gradient(#e0e0e0, #e0e0e0) right / 2px 22px no-repeat #fff; border-bottom: 1px solid #e0e0e0; }
.criteria th:last-child { background: #fff; }
.criteria td { height: 42px; padding-left: 4px; }
.criteria .sel td:not(:last-child) { background: #dcdcdc; }
.criteria td.ind { padding-left: 53px; }
.valcell { display: flex; align-items: center; justify-content: space-between; width: 570px; }
.marker { position: absolute; left: -15px; top: 70px; width: 990px; height: 60px; pointer-events: none; }
.actions { display: flex; align-items: center; height: 90px; padding: 0 8px 2px; }
.split { height: 40px; }
.split span { flex: 1; text-align: center; }
.split i { width: 2px; height: 24px; background: #e2e2e2; }
.split .ch { margin: 0 10px 0 8px; }
.actions .split { width: 236px; }
.remove { width: 236px; height: 42px; margin-left: 24px; }
.pair { width: 76px; height: 42px; gap: 12px; }
.pair.on { background: var(--sel); height: 40px; }
.first { margin: 0 24px 0 auto; }
.result { display: flex; height: 102px; padding: 4px 8px 4px 6px; }
.result dl { display: grid; grid-template-columns: 1fr auto; width: 308px; padding: 8px 17px 8px 0; line-height: 40px; border-right: 2px solid var(--line); }
.selbtns { flex: 1; display: flex; align-items: center; justify-content: flex-end; }
.selbtns .btn { width: 176px; height: 56px; }
.selbtns span { width: 224px; text-align: center; }

/* quick options */
.quick { display: flex; height: 37px; background: var(--bg); }
.quick > * { display: flex; align-items: center; border-right: 2px solid #d0d0d0; }
.qz { width: 146px; padding-left: 4px; gap: 10px; }
.qn { width: 101px; padding-left: 9px; gap: 15px; }
.q { flex: none; width: 174px; padding: 4px 5px 0 7px; color: #222; }
.q:nth-child(n+10) { width: 172px; }
.q svg:first-child { margin-right: auto; }
.q span { width: 92px; text-align: left; white-space: nowrap; }
.q.num span { padding-left: 16px; }
.q .ch { margin-left: 4px; }
.q.last { flex: 1; border: 0; padding-right: 0; }
.dis { color: #b2b2b2; } .dis svg { opacity: .5; } .dis .keep { opacity: 1; }

/* teamwork palette */
.teamwork, .navigator { display: flex; flex-direction: column; padding-top: 9px; border-left: 3px solid #e2e2e2; background: var(--bg); }
.teamwork { position: relative; width: 362px; }
.teamwork h3, .navigator h3 { height: 44px; margin: 0 4px; gap: 15px; padding-left: 11px; }
.name { position: absolute; left: -10px; top: 14px; width: 159px; height: 38px; }
.online { display: flex; align-items: center; height: 40px; margin: 46px 5px 4px 9px; gap: 18px; flex: none; }
.online span { flex: 1; }
.act { display: flex; align-items: center; gap: 15px; padding: 0 6px 0 9px; margin-top: 10px; flex: none; }
.act .btn { flex: 1; }
.act .split span { padding-left: 8px; }
.act .send svg:first-child { margin-left: 0; }
.act .send span { padding: 0; white-space: nowrap; }
.teamwork hr { margin: 11px 0 4px; flex: none; }
.lbl { margin: 10px 5px 0; height: 32px; }
.colour .btn { width: 100%; }
.colour { margin-top: 8px; }
.pick .blk { right: 10px; top: 7px; width: 20px; height: 26px; stroke: #1f1f1f; }
.full { flex: none; height: 42px; margin: 8px 6px 9px; }
.thead { display: flex; align-items: center; height: 34px; margin-top: 4px; background: #fff; border-bottom: 1px solid #dedede; color: #000; flex: none; }
.thead > * { height: 24px; line-height: 24px; border-right: 2px solid #dedede; display: flex; align-items: center; }
.users i { width: 68px; } .users .c { width: 48px; justify-content: center; } .users .n { width: 214px; padding-left: 2px; }
.v { width: 216px; margin-left: 22px; border-left: 2px solid #dedede; padding-left: 3px; }
.w { width: 92px; padding-left: 2px; gap: 8px; }
.w svg { width: 18px; height: 18px; filter: brightness(0); }
.tbody { background: linear-gradient(#e4e4e4, #e4e4e4) right 25px top / 2px 100% no-repeat, linear-gradient(270deg, #fafafa 26px, #fff 26px); }
.ubody { height: 374px; flex: none; }
.list { display: block; width: 328px; height: 196px; margin-left: 2px; }
.grow { flex: 1; min-height: 0; }
.icons { display: flex; align-items: center; height: 72px; padding: 0 4px 0 6px; gap: 4px; flex: none; }
.icons span { flex: 1; }
.icons button { display: flex; align-items: center; justify-content: center; width: 56px; height: 56px; border-radius: 10px; }
.icons .dimbtn { background: #f5f5f5; } .dimbtn svg { opacity: .6; }
.msg { height: 64px; padding-top: 3px; }
.teamwork > h3:last-child { margin-bottom: 4px; margin-top: -4px; }

/* navigator */
.navigator { width: 371px; }
.maps { display: flex; align-items: center; height: 56px; margin: 7px 6px 0; flex: none; }
.maps button:not(.btn) { display: flex; align-items: center; justify-content: center; width: 56px; height: 54px; border-radius: 10px; margin-right: 4px; }
.maps > i { width: 2px; height: 40px; background: var(--line); margin: 0 12px 0 11px; }
.maps .b66 { margin-left: auto; }
.b66 { width: 66px; height: 42px; justify-content: space-between; padding-left: 17px; flex: none; }
.search { display: flex; justify-content: space-between; align-items: center; height: 42px; margin: 14px 6px 7px 5px; flex: none; }
.search label { display: flex; align-items: center; gap: 12px; width: 278px; height: 42px; padding-left: 14px; background: #fff; border: 1px solid #dcdcdc; border-bottom: 2px solid #bcbcbc; }
.search input { width: 190px; outline: 0; appearance: none; }
.search input::placeholder { color: #c0c0c0; opacity: 1; }
.search .b66 { padding-left: 11px; }
.treebox { display: grid; grid-template: 514px 27px / 1fr 28px; flex: none; background: #fafafa; }
.tree { background: #fff; border-right: 2px solid #e0e0e0; border-bottom: 2px solid #e0e0e0; overflow: hidden; color: #000; }
.tree li { display: flex; align-items: center; height: 48px; padding-left: 6px; white-space: nowrap; }
.tree .ch { width: 20px; height: 20px; stroke: #858585; margin-right: 12px; }
.tree .s36 { margin-right: 9px; stroke-width: 2; }
.tree .bl { stroke: #3f7cf6; }
.tree .l1 { padding-left: 34px; } .tree .l2 { padding-left: 62px; } .tree .l3 { padding-left: 90px; } .tree .l4 { padding-left: 118px; }
.tree .sel { background: #dcdcdc; }
.vbar i { display: block; width: 16px; height: 196px; margin: 6px; border-radius: 8px; background: #c2c2c2; }
.hbar i { display: block; width: 251px; height: 16px; margin: 6px; border-radius: 8px; background: #c2c2c2; }
.navtools { display: flex; align-items: center; height: 69px; padding: 0 4px; flex: none; }
.navtools button { display: flex; justify-content: center; align-items: center; width: 60px; height: 50px; }
.desc { padding: 1px 6px 0; flex: none; }
.desc li { display: flex; align-items: center; gap: 9px; height: 42px; }
.navigator > .full { margin: 5px 6px; height: 43px; }
.status { display: flex; align-items: center; gap: 12px; height: 70px; padding-left: 12px; font-weight: 700; flex: none; }
.status i { width: 36px; height: 36px; border-radius: 50%; background: radial-gradient(circle at 40% 40%, #417df7 62%, #3768cf 64%); }
.tracer { display: flex; flex-direction: column; border-top: 2px solid #e1e1e1; padding-top: 8px; color: #7c7c7c; flex: 1; }
.trow { display: flex; gap: 4px; margin: 11px 6px 0; }
.trow .btn { height: 56px; } .b56 { width: 56px; height: 56px; justify-content: space-between; padding-left: 12px; }
.rest { flex: 1; }
.trow .rest { justify-content: flex-end; }
.ticons { display: flex; align-items: center; gap: 24px; height: 76px; padding: 0 16px; }
.ticons span { flex: 1; }
.tracer label { margin: 13px 5px 11px; line-height: 29px; }
.srow { display: flex; align-items: center; margin: 0 6px; gap: 5px; }
.slider { flex: 1; padding: 4px 0 0 3px; }
.slider input { display: block; width: 100%; height: 32px; appearance: none; background: linear-gradient(#e2e2e2, #e2e2e2) center / 100% 8px no-repeat; }
.slider input::-webkit-slider-thumb { appearance: none; width: 16px; height: 32px; border-radius: 8px; background: #fafafa; box-shadow: 0 1px 3px rgba(0, 0, 0, .3); }
.slider i { display: block; height: 6px; margin: -4px 1px 0; background: repeating-linear-gradient(90deg, #b4b4b4 0 2px, transparent 2px 25px); }
.b28 { width: 28px; height: 56px; flex: none; }
.red { width: 24px; height: 24px; background: #f19a8c; }
.g { width: 26px; height: 28px; stroke: #85898d; }
.tracer .srow + label { margin: 10px 5px; line-height: 30px; }
.tracer .srow + hr { margin-top: 14px; }
.tfoot { display: flex; justify-content: center; align-items: center; gap: 22px; flex: 1; padding-top: 10px; }

/* status bar */
.statusbar { display: flex; align-items: center; justify-content: flex-end; height: 49px; padding: 0 24px 6px; }
.wins { margin-left: 110px; }
.statusbar i { width: 2px; height: 30px; margin: 0 22px 0 18px; background: #9a9a9a; }
.statusbar a { color: var(--ink); text-decoration: none; font: 500 26px/30px Lato, sans-serif; }
.statusbar span { font-weight: 300; }
```
